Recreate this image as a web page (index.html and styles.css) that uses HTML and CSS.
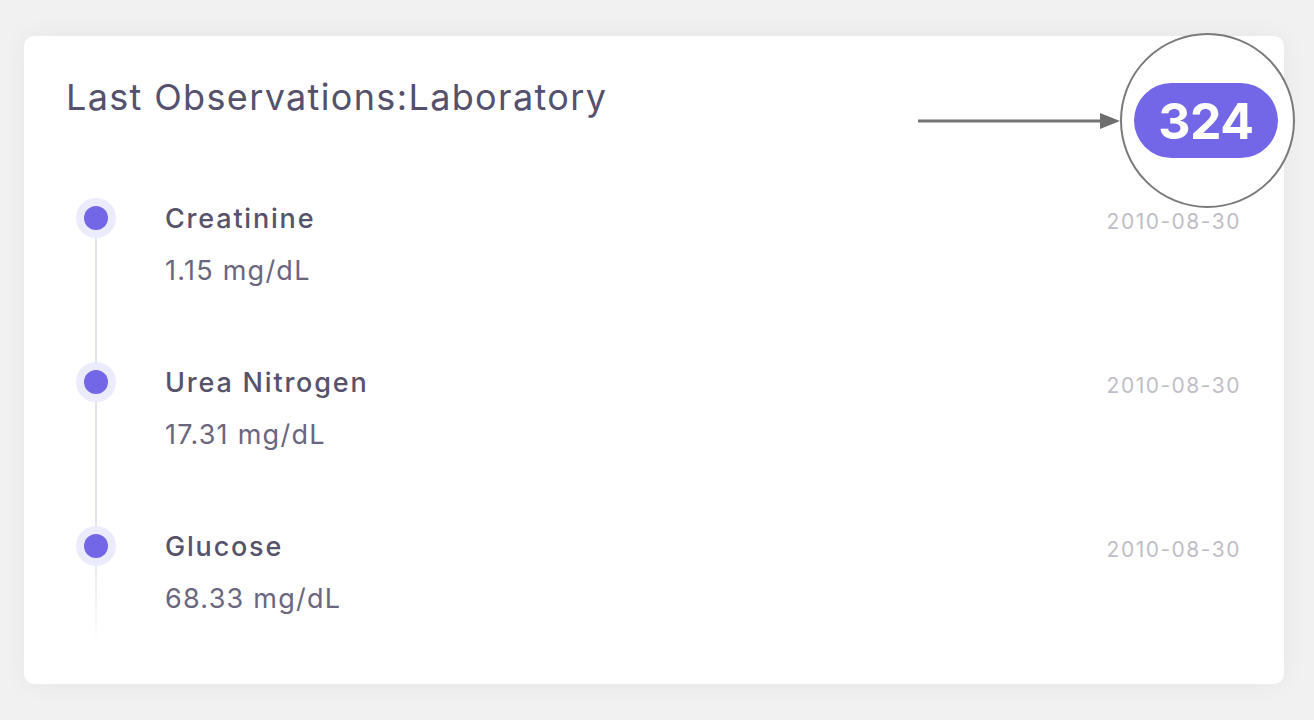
FILE: index.html
```html
<!DOCTYPE html>
<html>
<head>
<meta charset="utf-8">
<link rel="stylesheet" href="styles.css">
</head>
<body>
<div class="card">
  <div class="card-header">
    <h2 class="card-title">Last Observations:Laboratory</h2>
    <div class="annotation">
      <svg class="arrow" width="204" height="20" viewBox="0 0 204 20">
        <line x1="0" y1="10" x2="186" y2="10" stroke="#747474" stroke-width="3"/>
        <polygon points="182,2 202,10 182,18" fill="#6e6e6e"/>
      </svg>
      <div class="magnifier">
        <span class="badge">324</span>
      </div>
    </div>
  </div>
  <ul class="timeline">
    <li class="tl-item">
      <span class="tl-dot"></span>
      <div class="tl-body">
        <div class="tl-name">Creatinine</div>
        <div class="tl-value">1.15 mg/dL</div>
      </div>
      <div class="tl-date">2010-08-30</div>
    </li>
    <li class="tl-item">
      <span class="tl-dot"></span>
      <div class="tl-body">
        <div class="tl-name">Urea Nitrogen</div>
        <div class="tl-value">17.31 mg/dL</div>
      </div>
      <div class="tl-date">2010-08-30</div>
    </li>
    <li class="tl-item last">
      <span class="tl-dot"></span>
      <div class="tl-body">
        <div class="tl-name">Glucose</div>
        <div class="tl-value">68.33 mg/dL</div>
      </div>
      <div class="tl-date">2010-08-30</div>
    </li>
  </ul>
</div>
</body>
</html>
```

FILE: styles.css
```css
* { box-sizing: border-box; }
html, body { margin: 0; padding: 0; }
body {
  background: #f1f1f1;
  font-family: "Inter", "Noto Sans", sans-serif;
  width: 1314px;
  height: 720px;
  overflow: hidden;
  padding: 36px 30px 36px 24px;
}
.card {
  background: #ffffff;
  border-radius: 10px;
  height: 648px;
  box-shadow: 0 0 24px rgba(0, 0, 0, 0.05);
  padding: 39px 43px 0 52px;
  position: relative;
}
.card-header {
  display: flex;
  align-items: flex-start;
}
.card-title {
  margin: 0 0 0 -10px;
  font-size: 36px;
  line-height: 44px;
  font-weight: 400;
  color: #55516d;
  letter-spacing: 1.35px;
}
.annotation {
  position: absolute;
  top: -3px;
  left: 894px;
  display: flex;
  align-items: center;
}
.arrow { display: block; margin-right: -2px; }
.magnifier {
  width: 175px;
  height: 175px;
  border-radius: 50%;
  border: 2px solid #7a7a7a;
  background: #ffffff;
  display: flex;
  align-items: center;
  justify-content: center;
}
.badge {
  display: flex;
  align-items: center;
  justify-content: center;
  width: 144px;
  height: 75px;
  border-radius: 38px;
  background: #7367e8;
  color: #ffffff;
  font-size: 50px;
  font-weight: 700;
  letter-spacing: -0.5px;
  margin-left: -3px;
}
.timeline {
  list-style: none;
  margin: 79px 0 0 0;
  padding: 0;
}
.tl-item {
  display: grid;
  grid-template-columns: 40px 1fr auto;
  column-gap: 49px;
  height: 164px;
  position: relative;
}
.tl-item::before {
  content: "";
  position: absolute;
  left: 19px;
  top: 20px;
  width: 2px;
  height: 164px;
  background: #e5e4ee;
}
.tl-item.last::before {
  height: 100px;
  background: linear-gradient(#e5e4ee, rgba(229, 228, 238, 0));
}
.tl-dot {
  position: relative;
  width: 40px;
  height: 40px;
  border-radius: 50%;
  background: #ecebfb;
  display: flex;
  align-items: center;
  justify-content: center;
}
.tl-dot::after {
  content: "";
  width: 24px;
  height: 24px;
  border-radius: 50%;
  background: #7367e8;
}
.tl-body { padding-top: 4px; }
.tl-name {
  font-size: 27px;
  line-height: 34px;
  font-weight: 500;
  color: #56526c;
  letter-spacing: 1.8px;
}
.tl-value {
  margin-top: 18px;
  font-size: 27px;
  line-height: 34px;
  font-weight: 400;
  color: #6a667e;
  letter-spacing: 1.25px;
}
.tl-date {
  padding-top: 11px;
  font-size: 21px;
  line-height: 26px;
  color: #bfbec7;
  letter-spacing: 1.5px;
}
```
